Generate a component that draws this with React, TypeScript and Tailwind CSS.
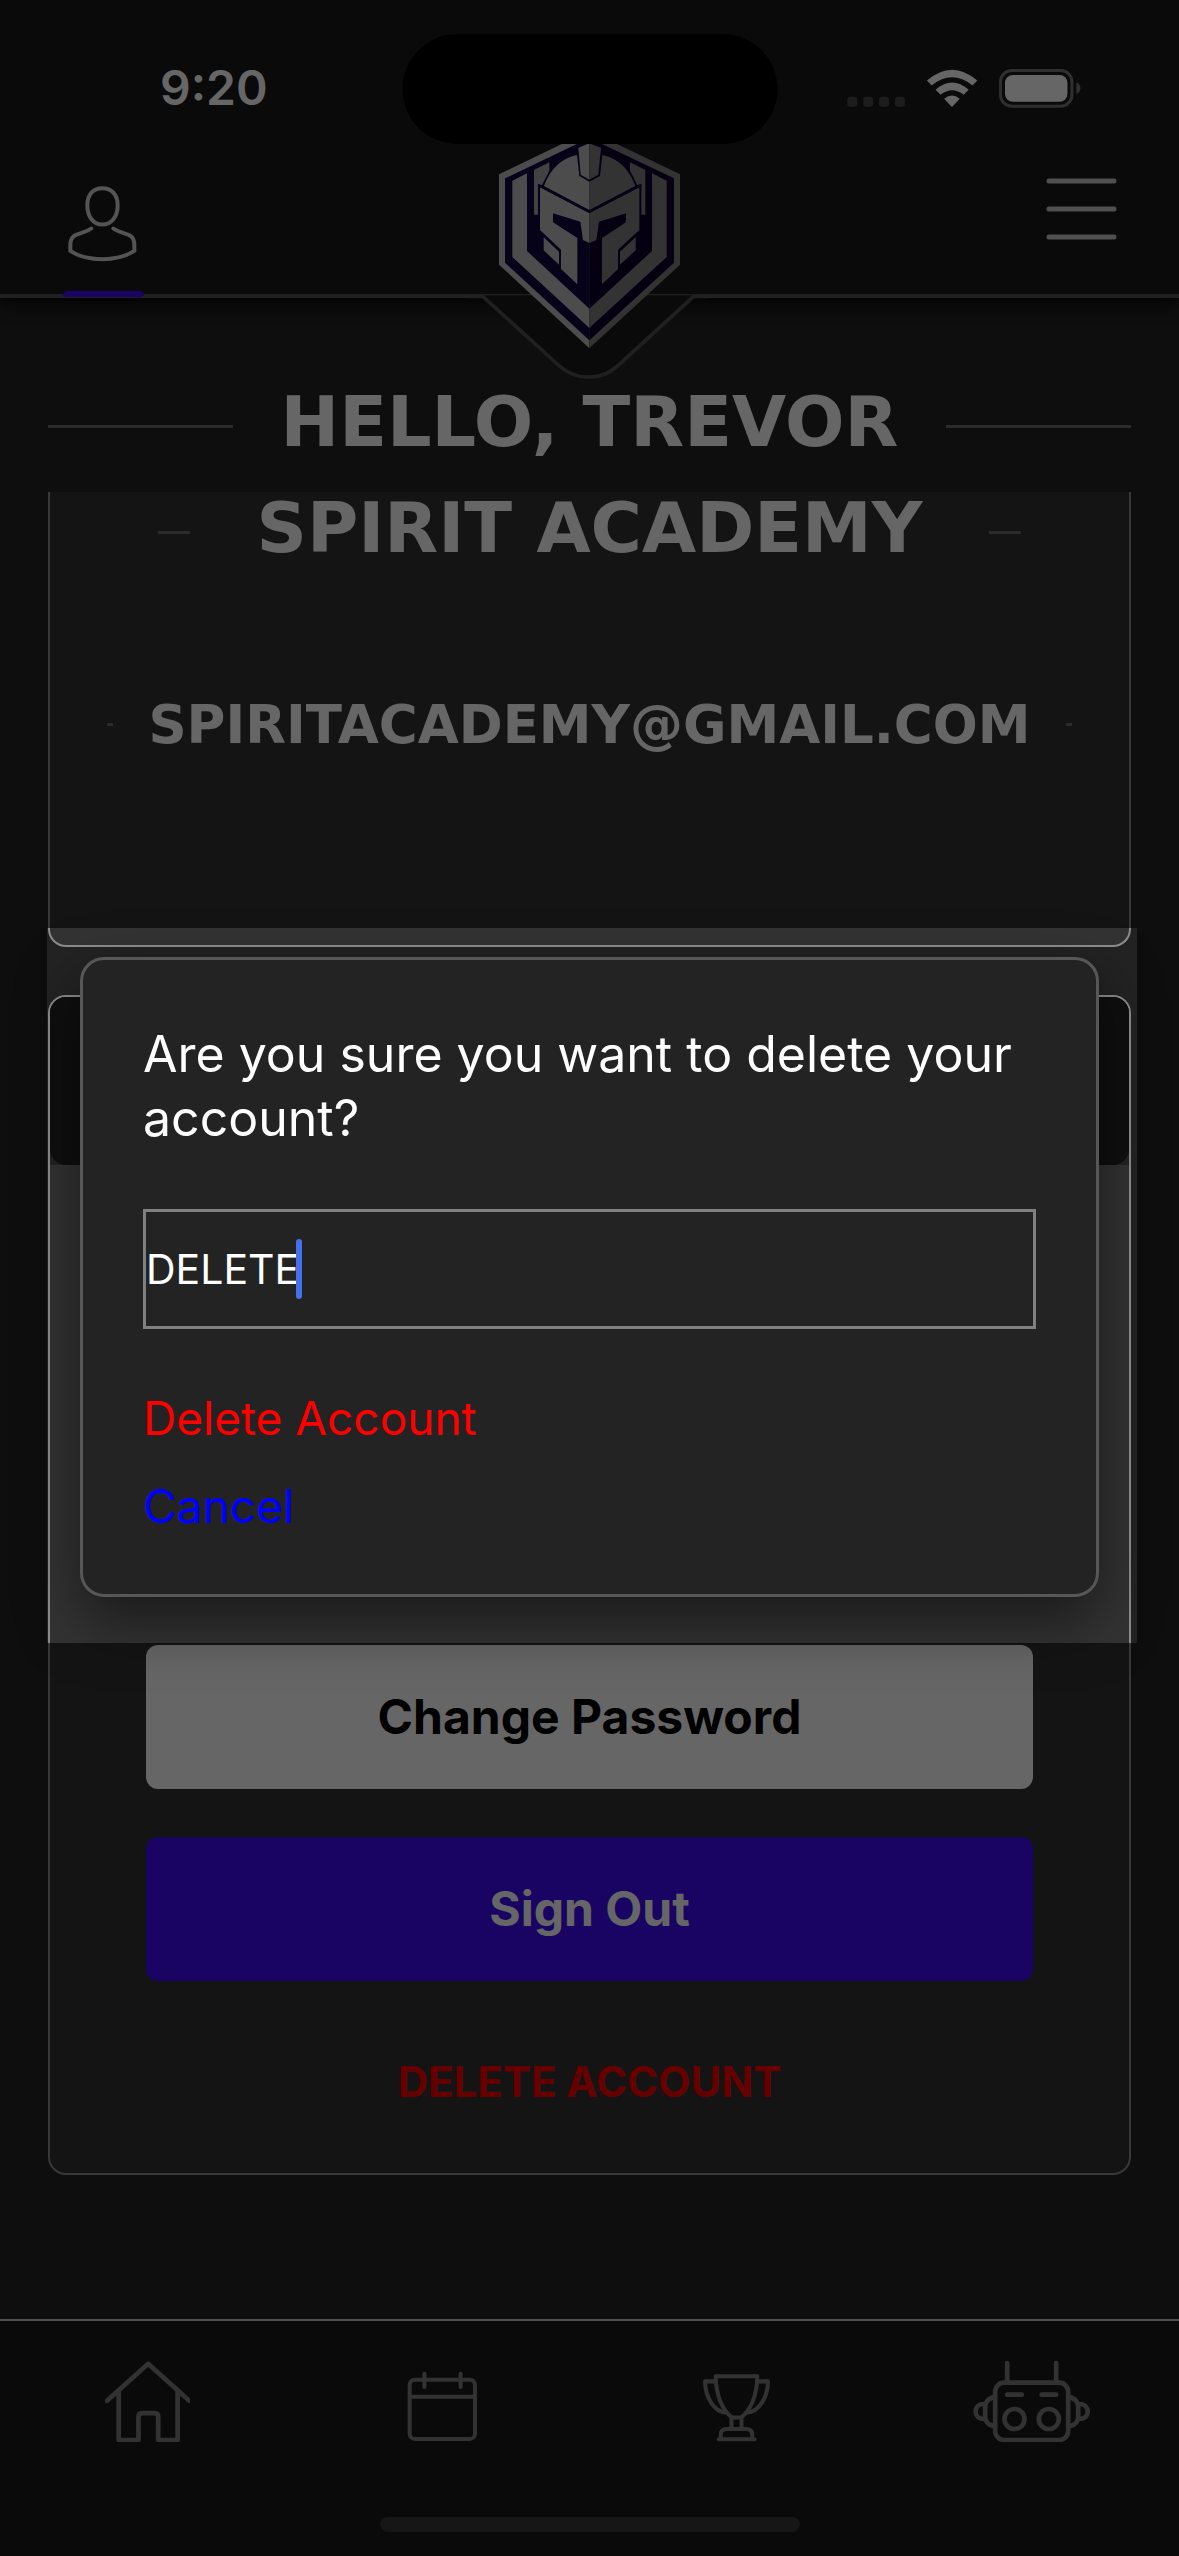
import { useState, type ReactNode } from "react";

function StatusBar() {
  return (
    <div className="flex h-[144px] items-center justify-between pt-8 pr-[97px] pl-[160px]">
      <time className="text-[48px] leading-none font-semibold">9:20</time>
      <svg viewBox="78 84 706 118" width="236" height="39" aria-hidden="true">
        <g fill="#484848">
          <rect x="78" y="168" width="30" height="30" rx="9" />
          <rect x="126" y="168" width="30" height="30" rx="9" />
          <rect x="174" y="168" width="30" height="30" rx="9" />
          <rect x="222" y="168" width="30" height="30" rx="9" />
        </g>
        <g fill="#fff">
          <path d="M319 119Q395 54 471 119L457 134Q395 84 333 134Z" />
          <path d="M345 147Q395 103 445 147L430 162Q395 134 360 162Z" />
          <path d="M371 174Q395 154 418 174L397 197Q395 199 392 197Z" />
        </g>
        <rect x="541.5" y="88.500" width="216" height="108" rx="34" fill="none" stroke="#777" strokeWidth="9" />
        <rect x="555" y="102" width="189" height="81" rx="24" fill="#fff" />
        <path d="M771 124Q783 130 783 142T771 160Z" fill="#777" />
      </svg>
    </div>
  );
}

function Crest() {
  return (
    <svg viewBox="0 0 720 780" className="pointer-events-none absolute top-[130px] left-1/2 w-[240px] -translate-x-1/2" aria-label="Knight crest" role="img">
      <path d="M38 496H671L448 700Q408 741 358 741H352Q305 741 265 702Z" fill="#191919" />
      <path d="M0 499H38L265 705Q305 741 352 741H362Q408 741 448 703L671 499H720" fill="none" stroke="#525252" strokeWidth="11" />
      <path d="M358 2L87 133V404L358 655Z" fill="#bdbdbd" />
      <path d="M358 2L630 133V404L358 655Z" fill="#7f7f7f" />
      <path d="M358 24L105 145V398L358 631Z" fill="#0f0541" />
      <path d="M358 24L612 145V398L358 631Z" fill="#0a002d" />
      <path d="M127 152L171 130V363L358 536V594L127 381Z" fill="#bdbdbd" />
      <path d="M590 152L546 130V363L358 536V594L590 381Z" fill="#7f7f7f" />
      <path d="M192 120L238 97V122L216 165L204 163V254H192Z" fill="#a6a6a6" />
      <path d="M526 120L480 97V122L502 165L514 163V254H526Z" fill="#7f7f7f" />
      <path d="M321 75Q250 90 222 168L358 240V155L328 138Z" fill="#bdbdbd" />
      <path d="M397 75Q468 90 496 168L358 240V155L390 138Z" fill="#7f7f7f" />
      <path d="M325 53L358 40V149L332 134Z" fill="#bdbdbd" />
      <path d="M393 53L358 40V149L385 134Z" fill="#7f7f7f" />
      <path d="M210 172L358 250V339L339 330L331 275L249 250V277L322 324V463L273 417V359L210 300Z" fill="#bdbdbd" />
      <path d="M508 172L358 250V339L379 330L387 275L468 250V277L396 324V463L444 417V359L508 300Z" fill="#7f7f7f" />
      <path d="M221 322L267 365V404L221 361Z" fill="#bdbdbd" />
      <path d="M497 322L450 365V404L497 361Z" fill="#7f7f7f" />
      <path d="M204 165L210 168L358 245L508 168L514 165" fill="none" stroke="#0f0541" strokeWidth="6" />
    </svg>
  );
}

function Header() {
  return (
    <header className="relative border-b-4 border-[#525252] bg-[#191919] shadow-[0_6px_14px_rgba(0,0,0,0.8)]">
      <StatusBar />
      <nav className="flex h-[150px] items-start justify-between px-[62px]" aria-label="Account">
        <button aria-label="Profile" className="relative flex h-[153px] w-[83px] justify-center pt-10 pr-1">
          <svg viewBox="108 102 216 236" width="72" height="79" fill="none" stroke="#d2d2d2" strokeWidth="12" strokeLinecap="round">
            <path d="M217 114C190 114 172 132 172 165C172 200 190 223 217 223C244 223 263 200 263 165C263 132 244 114 217 114Z" />
            <path d="M184 235C155 256 121 244 121 284V302C145 318 179 327 217 327C255 327 288 318 313 302V284C313 244 279 256 250 235" />
          </svg>
          <svg viewBox="0 0 83 6" width="83" height="6" className="absolute bottom-0 left-0" aria-hidden="true">
            <path d="M4 0H79L83 4L80 6H3L0 4Z" fill="#430cf8" />
          </svg>
        </button>
        <button aria-label="Menu" className="pt-8">
          <svg viewBox="0 0 71 66" width="71" height="66" stroke="#c8c8c8" strokeWidth="5" strokeLinecap="round">
            <path d="M3 5H68M3 33H68M3 61H68" />
          </svg>
        </button>
      </nav>
      <Crest />
      <div className="absolute top-[34px] left-1/2 h-[110px] w-[375px] -translate-x-1/2 rounded-full bg-black" />
    </header>
  );
}

function Profile() {
  return (
    <main className="flex-1 px-12">
      <div className="flex h-[194px] items-center gap-12 pt-[62px]">
        <span className="h-[3px] flex-1 bg-[#6c6c6c]" />
        <h1 className="pb-2 font-['DejaVu_Sans'] text-[70px] leading-none font-bold">HELLO, TREVOR</h1>
        <span className="h-[3px] flex-1 bg-[#6c6c6c]" />
      </div>
      <section className="h-[455px] rounded-b-[18px] border-2 border-t-0 border-[#8d8d8d] bg-[#333] font-['DejaVu_Sans'] font-bold">
        <div className="flex h-20 items-center justify-between px-[108px]">
          <span className="h-[3px] w-8 bg-[#6c6c6c]" />
          <h2 className="pb-2 text-[70px] leading-none">SPIRIT ACADEMY</h2>
          <span className="h-[3px] w-8 bg-[#6c6c6c]" />
        </div>
        <div className="mt-28 flex h-20 items-center justify-between px-[57px]">
          <span className="h-[3px] w-[6px] bg-[#6c6c6c]" />
          <p className="text-[53px] leading-none">SPIRITACADEMY@GMAIL.COM</p>
          <span className="h-[3px] w-[6px] bg-[#6c6c6c]" />
        </div>
      </section>
      <section className="mt-12 flex flex-col rounded-[18px] border-2 border-[#8d8d8d] bg-[#333]">
        <div className="mb-[480px] rounded-t-[16px] bg-[#232323]">
          <div className="h-[168px] rounded-[16px] bg-[#0f0f0f]" />
        </div>
        <div className="flex flex-col gap-12 px-24 pb-10">
          <button className="h-36 rounded-xl bg-white text-[48px] font-bold text-black">Change Password</button>
          <button className="h-36 rounded-xl bg-[#430cf8] text-[48px] font-bold">Sign Out</button>
          <button className="h-[104px] text-[42px] font-bold text-[#ff0000]">DELETE ACCOUNT</button>
        </div>
      </section>
    </main>
  );
}

function Tab({ label, children }: { label: string; children: ReactNode }) {
  return (
    <a href="#" aria-label={label} className="flex items-end justify-center">
      {children}
    </a>
  );
}

function TabBar() {
  return (
    <footer className="border-t-2 border-[#c8c8c8] bg-[#191919] pb-6">
      <nav className="grid h-[121px] grid-cols-4 text-[#7e7e7e]" aria-label="Main">
        <Tab label="Home">
          <svg viewBox="80 64 254 242" width="85" height="81" fill="none" stroke="currentColor" strokeWidth="14" strokeLinecap="round" strokeLinejoin="round">
            <path d="M86 183L209 72L332 183M121 155V300H180V232Q180 220 192 220H228Q239 220 239 232V300H297V155" />
          </svg>
        </Tab>
        <Tab label="Calendar">
          <svg viewBox="976 94 212 212" width="71" height="71" fill="none" stroke="currentColor" strokeWidth="12" strokeLinecap="round">
            <rect x="984" y="120" width="195" height="177" rx="16" />
            <path d="M984 171H1179M1028 102V142M1136 102V142" />
          </svg>
        </Tab>
        <Tab label="Trophies">
          <svg viewBox="68 100 206 206" width="69" height="69" fill="none" stroke="currentColor" strokeWidth="12" strokeLinecap="round" strokeLinejoin="round">
            <path d="M109 110H233C233 170 210 215 184 233H158C132 215 109 170 109 110Z" />
            <path d="M106 125H77C78 175 105 215 138 218M237 125H265C264 175 237 215 204 218" />
            <path d="M156 236V266M186 236V266M124 296V285Q124 267 142 267H200Q218 267 218 285V296M118 298H225" />
          </svg>
        </Tab>
        <Tab label="Robots">
          <svg viewBox="876 60 356 246" width="119" height="82" fill="none" stroke="currentColor" strokeWidth="14" strokeLinecap="round">
            <rect x="945" y="128" width="219" height="172" rx="27" />
            <path d="M981 69V125M1128 69V125M981 164H1025M1084 164H1128" />
            <circle cx="1003" cy="237" r="30" />
            <circle cx="1106" cy="237" r="30" />
            <path d="M940 171Q915 180 915 200V230Q915 252 940 258M1170 171Q1194 180 1194 200V230Q1194 252 1170 258" />
            <path d="M911 192C878 192 878 237 911 237M1198 192C1231 192 1231 237 1198 237" />
          </svg>
        </Tab>
      </nav>
      <div className="mx-auto mt-[75px] h-[15px] w-[420px] rounded-full bg-[#373737]" />
    </footer>
  );
}

function Scrim() {
  return (
    <div className="pointer-events-none absolute inset-0 flex flex-col" aria-hidden="true">
      <div className="h-[928px] bg-black/60" />
      <div className="flex h-[715px] justify-between">
        <div className="w-[47px] bg-black/60" />
        <div className="w-[42px] bg-black/60" />
      </div>
      <div className="flex-1 bg-black/60" />
    </div>
  );
}

function DeleteDialog() {
  const [value, setValue] = useState("DELETE");
  return (
    <div
      role="dialog"
      aria-labelledby="confirm-title"
      className="absolute inset-x-20 top-[957px] rounded-3xl border-[3px] border-[#575757] bg-[#232323] px-[60px] pt-[62px] pb-11 shadow-[0_24px_60px_rgba(0,0,0,0.5)]"
    >
      <label id="confirm-title" htmlFor="confirm" className="block text-[50px] leading-[64px]">
        Are you sure you want to delete your account?
      </label>
      <div className="relative mt-[59px]">
        <input
          id="confirm"
          value={value}
          onChange={(e) => setValue(e.target.value)}
          className="block h-[120px] w-full border-[3px] border-[#808080] bg-transparent text-[41px] outline-none"
        />
        <span className="absolute top-[30px] left-[153px] h-[60px] w-[6px] rounded-full bg-[#4770ee]" />
      </div>
      <div className="mt-[45px] flex flex-col items-start">
        <button className="h-[88px] text-[46px] text-[#ff0000]">Delete Account</button>
        <button className="h-[88px] text-[46px] text-[#0000ff]">Cancel</button>
      </div>
    </div>
  );
}

export default function App() {
  return (
    <div className="relative flex min-h-screen flex-col bg-[#232323] font-['Inter',sans-serif] text-white">
      <Header />
      <Profile />
      <TabBar />
      <Scrim />
      <DeleteDialog />
    </div>
  );
}
